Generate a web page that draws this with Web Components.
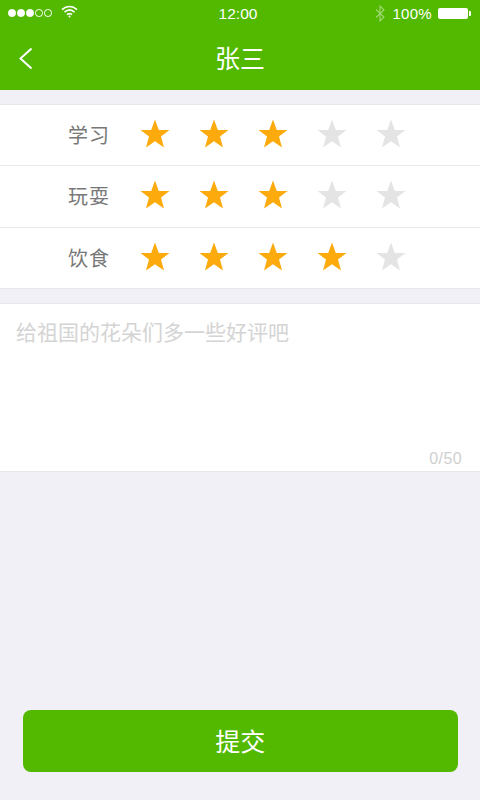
<!DOCTYPE html>
<html lang="zh"><head><meta charset="utf-8">
<style>
html,body{margin:0;padding:0}
body{width:480px;height:800px;overflow:hidden;background:#f0f0f6;font-family:"Liberation Sans","Noto Sans CJK SC",sans-serif}
</style></head><body>
<rate-page></rate-page>
<template id="t-status"><style>
:host{display:flex;align-items:center;height:26px;padding:0 9px 0 8px;color:#fff;font:15px "Liberation Sans",sans-serif;position:relative}
.dots{display:flex;gap:1.5px;margin-right:9px}
.dots i{width:7.5px;height:7.5px;border-radius:50%;background:#fff;box-sizing:border-box;border:1px solid #fff}
.dots i.o{background:none}
svg.w{margin-top:-3px}
.time{position:absolute;left:0;right:4px;text-align:center;top:5px;line-height:17px;font-size:15.500px}
.r{margin-left:auto;display:flex;align-items:center}
.pct{margin:0 6px 0 7px;letter-spacing:.3px}
.bt{width:30px;height:11px;border:1px solid rgba(255,255,255,.9);border-radius:2px;background:#fff;box-sizing:border-box}
.nub{width:2px;height:5px;background:#fff;margin-left:1px;border-radius:0 1px 1px 0}
</style>
<div class="dots"><i></i><i></i><i></i><i class="o"></i><i class="o"></i></div>
<svg class="w" width="17" height="13" viewBox="0 0 17 13" fill="none" stroke="#fff" stroke-width="1.6"><path d="M1 4.6C5.5.4 11.5.4 16 4.6"/><path d="M3.5 7.2C6.6 4.4 10.400 4.400 13.500 7.200"/><path d="M6 9.600C7.600 8.300 9.400 8.300 11 9.600"/><circle cx="8.500" cy="11.500" r="1" fill="#fff" stroke="none"/></svg>
<div class="time">12:00</div>
<div class="r"><svg width="10" height="17" viewBox="0 0 10 17" fill="none" stroke="#fff" stroke-opacity=".45" stroke-width="1.100"><path d="M1 4.500l8 7.500-4 4V1l4 4-8 7.500"/></svg><span class="pct">100%</span><div class="bt"></div><div class="nub"></div></div>
</template>
<template id="t-nav"><style>
:host{display:flex;align-items:center;justify-content:center;height:64px;position:relative;color:#fff;font:25px "Noto Sans CJK SC",sans-serif}
svg{position:absolute;left:18px;top:21px}
span{margin-top:-2px}
</style>
<svg width="15" height="23" viewBox="0 0 15 23" fill="none" stroke="#fff" stroke-width="2"><path d="M13.500 1.500L2.500 11.500l11 10"/></svg><span><slot></slot></span>
</template>
<template id="t-row"><style>
:host{display:flex;align-items:center;height:61.33px;padding-left:68px;box-sizing:border-box;background:#fff;border-bottom:1px solid #e8e8ec;color:#777;font:20px "Noto Sans CJK SC",sans-serif}
.l{width:73px;flex:none;letter-spacing:1px;margin-top:-1px}
.s{display:flex;gap:29px;margin-left:-1px;margin-top:-2px}
svg{width:30px;height:30px;display:block}
</style><div class="l"><slot></slot></div><div class="s"></div></template>
<template id="t-note"><style>
:host{display:block;height:169px;box-sizing:border-box;margin-top:14px;background:#fff;border-top:1px solid #e8e8ec;border-bottom:1px solid #e8e8ec;position:relative;font-family:"Noto Sans CJK SC",sans-serif}
.p{padding:13px 16px;font-size:21px;line-height:29px;color:#d4d4d4}
.c{position:absolute;right:18px;bottom:3px;font:16px "Liberation Sans",sans-serif;color:#cfcfcf;letter-spacing:.4px}
</style><div class="p"><slot></slot></div><div class="c">0/50</div></template>
<template id="t-btn"><style>
:host{display:flex;align-items:center;justify-content:center;height:62px;margin:0 22.500px 0 23px;background:#52b900;border-radius:8px;color:#fff;font:25px "Noto Sans CJK SC",sans-serif}
span{margin-top:-3px}
</style><span><slot></slot></span></template>
<template id="t-page"><style>
:host{display:flex;flex-direction:column;height:800px}
.head{background:#52b900;height:90px}
.card{margin-top:14px;border-top:1px solid #e8e8ec}
.sp{flex:1}
.foot{padding-bottom:28px}
</style>
<div class="head"><status-bar></status-bar><nav-bar>张三</nav-bar></div>
<div class="card"><star-row score="3">学习</star-row><star-row score="3">玩耍</star-row><star-row score="4">饮食</star-row></div>
<note-box>给祖国的花朵们多一些好评吧</note-box>
<div class="sp"></div>
<div class="foot"><submit-btn>提交</submit-btn></div>
</template>
<script>
function def(name,id,init){customElements.define(name,class extends HTMLElement{connectedCallback(){if(this.shadowRoot)return;const r=this.attachShadow({mode:'open'});r.appendChild(document.getElementById(id).content.cloneNode(true));if(init)init.call(this,r)}})}
def('status-bar','t-status');def('nav-bar','t-nav');def('note-box','t-note');def('submit-btn','t-btn');
def('star-row','t-row',function(r){const n=+this.getAttribute('score');let h='';for(let i=0;i<5;i++)h+=`<svg viewBox="0 0 30 30"><path fill="${i<n?'#fdaa0c':'#e4e4e4'}" d="M15 .5L18.800 11H29.500L21 17.600 24 28.500 15 22.300 6 28.500 9 17.600 .5 11H11.200z"/></svg>`;r.querySelector('.s').innerHTML=h});
def('rate-page','t-page');
</script>
</body></html>
